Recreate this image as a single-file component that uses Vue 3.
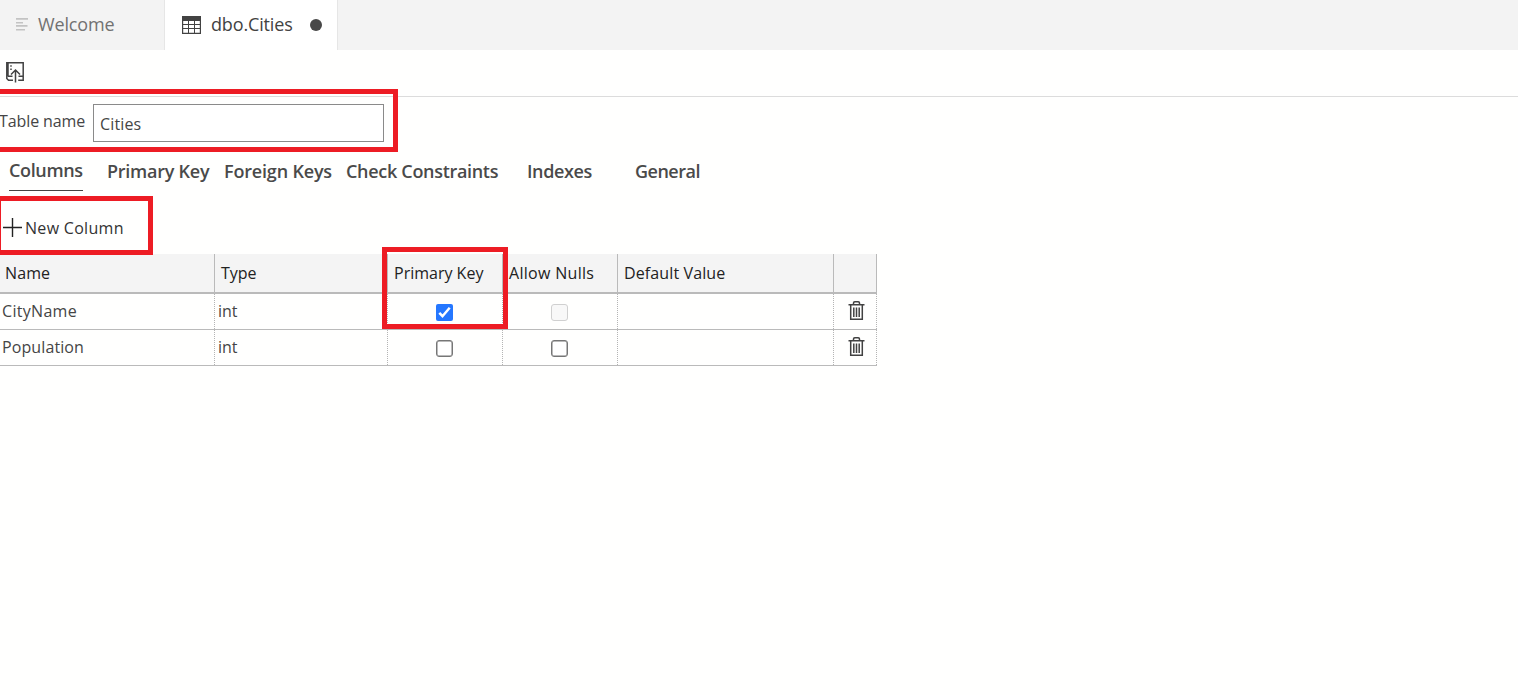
<script setup>
import { ref } from 'vue'

const tableName = ref('Cities')
const sections = [
  { label: 'Columns', cls: 's-columns', active: true },
  { label: 'Primary Key', cls: 's-pk' },
  { label: 'Foreign Keys', cls: 's-fk' },
  { label: 'Check Constraints', cls: 's-check' },
  { label: 'Indexes', cls: 's-indexes' },
  { label: 'General', cls: 's-general' },
]
const headers = [
  { label: 'Name', cls: 'h-name' },
  { label: 'Type', cls: 'h-type' },
  { label: 'Primary Key', cls: 'h-pk' },
  { label: 'Allow Nulls', cls: 'h-nulls' },
  { label: 'Default Value', cls: 'h-default' },
  { label: '', cls: 'h-del' },
]
const rows = ref([
  { name: 'CityName', cls: 'r-city', type: 'int', pk: true, nullsDisabled: true },
  { name: 'Population', cls: 'r-pop', type: 'int', pk: false, nullsDisabled: false },
])
</script>

<template>
  <div class="editor">
    <nav class="tabs">
      <div class="tab inactive">
        <svg class="lines" width="12" height="13" viewBox="0 0 12 13" fill="#c3c3c3">
          <path d="M0 0h12v1.700H0zM0 4h7v1.500H0zM0 7h11.500v1.700H0zM0 11h9v1.500H0z" />
        </svg>
        <span class="t-welcome">Welcome</span>
      </div>
      <div class="tab current">
        <svg class="grid-icon" width="19" height="18" viewBox="0 0 19 18">
          <path d="M0 0h19v18H0z" fill="#424242" />
          <path d="M1.200 5h4.800v3H1.200zM7 5h5v3H7zM13 5h4.800v3H13zM1.200 9h4.800v3H1.200zM7 9h5v3H7zM13 9h4.800v3H13zM1.200 13h4.800v3.800H1.200zM7 13h5v3.800H7zM13 13h4.800v3.800H13z" fill="#fff" />
        </svg>
        <span class="t-cities">dbo.Cities</span>
        <i class="dirty"></i>
      </div>
    </nav>

    <div class="toolbar">
      <svg width="18" height="21" viewBox="0 0 18 21" fill="none" stroke="#424242" stroke-width="1.500">
        <path d="M7 18.200H2.500L.8 16.500V.8h16.400v17.400h-5M2 1v13.500M2 14.200h4.500M12.500 14.200h4.500" />
        <path d="M9.500 20.500V8.500M5 12.500l4.500-4.500 4.500 4.500" />
        <path d="M5 3.200v1.600M5 6.400v1.600" />
      </svg>
    </div>

    <div class="name-row">
      <label for="table-name" class="t-label">Table name</label>
      <input id="table-name" v-model="tableName" class="t-input" />
      <div class="mark mark-name"></div>
    </div>

    <div class="sections">
      <div v-for="s in sections" :key="s.label" class="section" :class="[s.cls, { active: s.active }]">
        <span>{{ s.label }}</span>
      </div>
    </div>

    <div class="actions">
      <svg width="19" height="19" viewBox="0 0 19 19" stroke="#222" stroke-width="1.400">
        <path d="M0 9.500h19M9.500 0v19" />
      </svg>
      <span class="t-new">New Column</span>
      <div class="mark mark-new"></div>
    </div>

    <div class="table">
      <div class="row head">
        <div v-for="h in headers" :key="h.cls" class="cell"><span :class="h.cls">{{ h.label }}</span></div>
      </div>
      <div v-for="r in rows" :key="r.name" class="row body">
        <div class="cell"><span :class="r.cls">{{ r.name }}</span></div>
        <div class="cell"><span class="r-type">{{ r.type }}</span></div>
        <div class="cell center">
          <span class="box" :class="{ checked: r.pk }">
            <svg v-if="r.pk" width="17" height="17" viewBox="0 0 17 17" fill="none" stroke="#fff" stroke-width="2.500">
              <path d="M3.300 8.800l3.200 3.400L13.700 3.800" />
            </svg>
          </span>
        </div>
        <div class="cell center"><span class="box" :class="{ disabled: r.nullsDisabled }"></span></div>
        <div class="cell"></div>
        <div class="cell center trash">
          <svg width="17" height="19" viewBox="0 0 17 19" fill="none" stroke="#424242" stroke-width="1.500">
            <path d="M.5 3.700h16M5.500 3.500V2q0-1.200 1.300-1.200h3.400q1.300 0 1.300 1.200v1.500M2.700 4v14.200h11.600V4M5.800 6.500V16M8.500 6.500V16M11.200 6.500V16" />
          </svg>
        </div>
      </div>
      <div class="mark mark-pk"></div>
    </div>
  </div>
</template>

<style>
html, body { background: #fffffe; }
</style>

<style scoped>
.editor {
  height: 695px;
  overflow: hidden;
  background: #fffffe;
  color: #454545;
  font-family: "Open Sans", "Noto Sans", sans-serif;
  font-size: 16px;
}
.editor * { box-sizing: border-box; }
.editor svg { display: block; flex: none; }
span, label { white-space: nowrap; }
.tabs { display: flex; height: 50px; background: #f3f3f3; font-size: 18px; }
.tab { display: flex; align-items: center; height: 50px; border-right: 1px solid #e6e6e6; }
.tab span { padding-bottom: 2px; letter-spacing: -.15px; }
.inactive { width: 165px; padding-left: 16px; color: #717171; }
.lines { margin: -2px 10px 0 0; }
.current { width: 173px; padding-left: 17px; background: #fff; color: #424242; }
.grid-icon { margin-right: 10px; }
.t-cities { width: 99px; }
.dirty { width: 12px; height: 12px; margin-top: -1px; border-radius: 50%; background: #484848; }
.toolbar { height: 47px; padding: 12px 0 0 6px; border-bottom: 1px solid #dcdcdc; }
.name-row { position: relative; display: flex; height: 58px; padding-top: 7px; }
.t-label { width: 93px; line-height: 34px; letter-spacing: -.1px; text-indent: -1px; }
.t-input {
  width: 291px; height: 38px; padding: 2px 6px 0; border: 1px solid #8a8a8a;
  background: #fff; color: #454545; font-family: inherit; font-size: 16px; letter-spacing: .15px; outline: none;
}
.mark { position: absolute; z-index: 1; border: 5px solid #ed1c24; pointer-events: none; }
.mark-name { left: -5px; top: -8px; width: 403px; height: 63px; }
.sections { display: flex; height: 41px; padding-left: 9px; font-size: 18px; font-weight: 600; letter-spacing: -.25px; color: #4a4a4a; }
.section { line-height: 32px; }
.section.active { height: 36px; line-height: 30px; border-bottom: 1px solid #444; }
.s-columns { width: 74px; margin-right: 24px; letter-spacing: -.35px; }
.s-pk { width: 117px; }
.s-fk { width: 122px; letter-spacing: -.18px; }
.s-check { width: 181px; letter-spacing: -.31px; }
.s-indexes { width: 108px; letter-spacing: -.4px; }
.s-general { letter-spacing: -.5px; }
.actions { position: relative; display: flex; align-items: center; height: 58px; padding: 6px 0 0 3px; color: #333; }
.actions svg { margin: -1px 3px 0 0; }
.t-new { letter-spacing: .3px; }
.mark-new { left: -4px; top: 0; width: 157px; height: 59px; }
.table { position: relative; width: 877px; }
.row { display: grid; grid-template-columns: 215px 173px 115px 115px 216px 43px; }
.head { height: 40px; background: #f4f4f4; border-bottom: 2px solid #bababa; color: #222; }
.head .cell { padding-left: 6px; line-height: 38px; border-right: 1px solid #bababa; }
.head .cell:first-child { padding-left: 5px; }
.h-name { letter-spacing: .1px; }
.h-nulls { letter-spacing: .3px; }
.h-default { letter-spacing: .12px; }
.body { height: 36px; border-bottom: 1px solid #bababa; }
.body .cell { padding-left: 3px; line-height: 34px; border-right: 1px dotted #b4b4b4; }
.body .cell:first-child { padding-left: 2px; }
.r-city { letter-spacing: .3px; }
.r-pop { letter-spacing: .1px; }
.body .center { display: flex; justify-content: center; padding: 10px 1px 0 0; }
.body .trash { padding: 7px 0 0 3px; }
.box { display: block; width: 17px; height: 17px; border: 1.500px solid #767676; border-radius: 3px; background: #fff; line-height: 0; box-shadow: inset 0 0 0 .5px #767676; }
.box.checked { border: 0; background: #2577ff; border-radius: 2px; box-shadow: none; }
.box.disabled { border-color: #d0d0d0; background: #f8f8f8; box-shadow: none; }
.mark-pk { left: 382px; top: -7px; width: 126px; height: 82px; }
</style>
